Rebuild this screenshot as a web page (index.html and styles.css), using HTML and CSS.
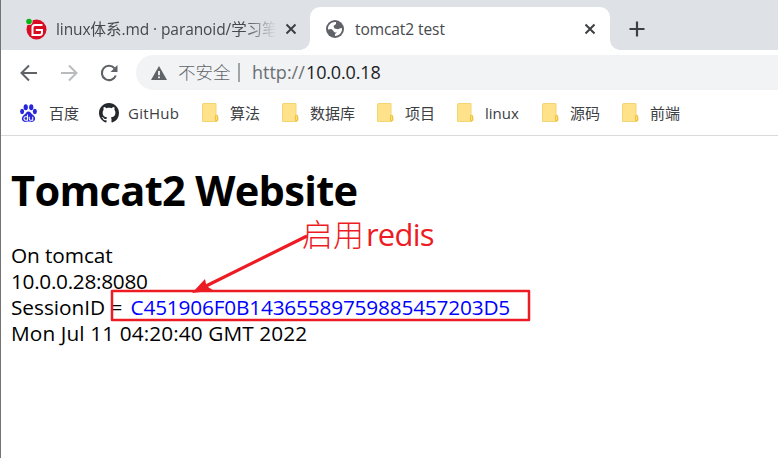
FILE: index.html
```html
<!DOCTYPE html>
<html lang="zh-CN">
<head>
<meta charset="utf-8">
<title>tomcat2 test</title>
<link rel="stylesheet" href="styles.css">
</head>
<body>
<svg class="defs" width="0" height="0" aria-hidden="true">
  <symbol id="folder" viewBox="0 0 17 19"><path d="M1 .5h13v12.200l2 1V17l-1 1.500H.5V1z" fill="#ffe28a" stroke="#f4d573"/><path d="M13.500 13v5M13.500 12.500h2v5h-2z" fill="#ffdf70" stroke="#edc344"/></symbol>
  <symbol id="close" viewBox="0 0 12 12"><path d="M1.500 1.500l9 9M10.500 1.500l-9 9" stroke="#3c4043" stroke-width="2"/></symbol>
</svg>
<div class="browser">
  <header class="tabs">
    <div class="tab tab-idle">
      <svg class="gitee" viewBox="0 0 22 22"><circle cx="11.500" cy="11.500" r="10" fill="#d90d22"/><path d="M17.500 7H10q-2.500 0-2.500 2.500V17h7q2.500 0 2.500-2.500V12h-6.200" fill="none" stroke="#fff" stroke-width="2"/><circle cx="4" cy="3.500" r="3.600" fill="#dee1e6"/><circle cx="4" cy="3.500" r="2.800" fill="#09b514"/></svg>
      <span class="tab-title fade">linux体系.md · paranoid/学习笔</span>
      <svg class="close"><use href="#close"/></svg>
    </div>
    <div class="tab tab-active">
      <svg class="globe" viewBox="0 0 18 18"><circle cx="9" cy="9" r="9" fill="#5f6368"/><path d="M10 2C5.500 1.500 1.500 5 2 9.500L5.500 9l2 2q.5 1.500 2 1.500h1.500L9 14v2c4.500 0 7.500-4 7-8l-2.500.5q-1 1-2.500.5T8.500 8.500L7.500 6l2.500-2z" fill="#fff"/></svg>
      <span class="tab-title active-title">tomcat2 test</span>
      <svg class="close"><use href="#close"/></svg>
    </div>
    <svg class="plus" viewBox="0 0 16 16"><path d="M8 .5v15M.5 8h15" stroke="#3c4043" stroke-width="2.200"/></svg>
  </header>
  <nav class="toolbar">
    <svg class="nav-icon" viewBox="0 0 18 18"><path d="M17 9H2M9 1.500L1.500 9 9 16.500" fill="none" stroke="#5f6368" stroke-width="2"/></svg>
    <svg class="nav-icon" viewBox="0 0 18 18"><path d="M1 9h15M9 1.500L16.500 9 9 16.500" fill="none" stroke="#b9bbbd" stroke-width="2"/></svg>
    <svg class="nav-icon" viewBox="0 0 18 18"><path d="M15.800 11.500A7.200 7.200 0 1 1 14.500 4.200" fill="none" stroke="#5f6368" stroke-width="2.100"/><path d="M17.500 1v7h-7z" fill="#5f6368"/></svg>
    <div class="address">
      <svg class="warning" viewBox="0 0 16 14"><path d="M8 0l8 14H0z" fill="#5f6368"/><path d="M8 5v4.300M8 10.400v1.900" stroke="#fff" stroke-width="1.700"/></svg>
      <span class="insecure">不安全</span><i class="divider"></i><span class="scheme">http://</span><span class="host">10.0.0.18</span>
    </div>
  </nav>
  <nav class="bookmarks">
    <a class="bookmark baidu"><svg viewBox="0 0 16 17"><g fill="#2726dc"><ellipse cx="5.400" cy="3" rx="2" ry="2.800"/><ellipse cx="10.600" cy="3" rx="2" ry="2.800"/><ellipse cx="2" cy="7.100" rx="1.900" ry="2.500"/><ellipse cx="14" cy="7.100" rx="1.900" ry="2.500"/><path d="M8 7c2 0 2.500 2.100 4.300 3.500 3.200 2.400 2.200 6.400-1 6.400-1.400 0-2-.3-3.300-.3s-1.900.3-3.300.3c-3.200 0-4.200-4-1-6.400C5.500 9.100 6 7 8 7z"/></g><path d="M7 10v5.300H5.200q-1.500 0-1.500-1.600t1.500-1.600H7M8.700 12v2q0 1.300 1.300 1.300h2V12" fill="none" stroke="#fff"/></svg><span>百度</span></a>
    <a class="bookmark github"><svg viewBox="0 0 16 16"><path fill="#24292e" d="M8 0C3.580 0 0 3.580 0 8c0 3.540 2.290 6.530 5.470 7.590.4.070.55-.17.55-.38 0-.19-.01-.82-.01-1.490-2.010.37-2.530-.49-2.690-.94-.09-.23-.48-.94-.82-1.130-.28-.15-.68-.52-.01-.53.63-.01 1.080.58 1.230.82.72 1.210 1.870.87 2.330.66.07-.52.28-.87.51-1.070-1.780-.2-3.640-.89-3.640-3.950 0-.87.31-1.590.82-2.150-.08-.2-.36-1.020.08-2.120 0 0 .67-.21 2.200.82.64-.18 1.320-.27 2-.27s1.360.09 2 .27c1.530-1.040 2.200-.82 2.200-.82.44 1.100.16 1.920.08 2.120.51.56.82 1.270.82 2.150 0 3.070-1.870 3.750-3.650 3.950.29.25.54.73.54 1.480 0 1.070-.01 1.930-.01 2.200 0 .21.15.46.55.38A8.010 8.010 0 0 0 16 8c0-4.420-3.580-8-8-8z"/></svg><span>GitHub</span></a>
    <a class="bookmark w80"><svg><use href="#folder"/></svg><span>算法</span></a>
    <a class="bookmark w95"><svg><use href="#folder"/></svg><span>数据库</span></a>
    <a class="bookmark w80"><svg><use href="#folder"/></svg><span>项目</span></a>
    <a class="bookmark w85"><svg><use href="#folder"/></svg><span>linux</span></a>
    <a class="bookmark w80"><svg><use href="#folder"/></svg><span>源码</span></a>
    <a class="bookmark w80"><svg><use href="#folder"/></svg><span>前端</span></a>
  </nav>
  <main class="page">
    <h1>Tomcat2 Website</h1>
    <div class="line on">On tomcat</div>
    <div class="line ip">10.0.0.28:8080</div>
    <div class="line session"><span class="label">SessionID =</span><span class="session-id">C451906F0B14365589759885457203D5</span></div>
    <div class="line date">Mon Jul 11 04:20:40 GMT 2022</div>
  </main>
  <svg class="annotation" viewBox="0 0 778 458" fill="none"><rect x="112" y="291" width="417" height="29" stroke="#ed1c24" stroke-width="2.500" stroke-linejoin="round"/><path d="M307 236L204 287" stroke="#ed1c24" stroke-width="3.200"/><path d="M192 293l13-14 1.500 7 7 4.500z" fill="#ed1c24"/></svg>
  <div class="note"><span class="note-cn">启用</span><span class="note-en">redis</span></div>
</div>
</body>
</html>
```
FILE: styles.css
```css
* { box-sizing: border-box; }
body { margin: 0; width: 778px; height: 458px; overflow: hidden; background: #fff; font-family: "Open Sans", "Noto Sans CJK SC", sans-serif; }
svg { display: block; flex: none; }
.defs { position: absolute; }
.browser { position: relative; height: 458px; border-left: 1px solid #747474; }
.tabs { display: flex; height: 50px; padding-top: 7px; background: #dee1e6; }
.tab { display: flex; align-items: center; height: 43px; white-space: nowrap; }
.tab-idle { width: 309px; padding-left: 24px; background: #dee1e6; border-radius: 0 0 10px 0; }
.tab-active { position: relative; width: 300px; padding-left: 16px; background: #fff; border-radius: 10px 10px 0 0; }
.tab-active::before, .tab-active::after { content: ""; position: absolute; bottom: 0; width: 10px; height: 10px; }
.tab-active::before { left: -10px; background: radial-gradient(circle at 0 0, transparent 9.5px, #fff 10px); }
.tab-active::after { right: -10px; background: radial-gradient(circle at 100% 0, transparent 9.5px, #fff 10px); }
.gitee { width: 22px; height: 22px; }
.tab-title { margin-left: 9px; font-size: 15.5px; line-height: 24px; color: #45494d; }
.fade { width: 220px; overflow: hidden; letter-spacing: -.08px; -webkit-mask-image: linear-gradient(90deg, #000 188px, transparent 220px); mask-image: linear-gradient(90deg, #000 188px, transparent 220px); }
.active-title { width: 220px; margin-left: 11px; letter-spacing: -.08px; }
.close { width: 12px; height: 12px; margin-left: 9px; }
.tab-active .close { margin-left: 9px; }
.globe { width: 18px; height: 18px; }
.plus { width: 16px; height: 16px; margin: 14px 0 0 19px; }
.toolbar { display: flex; align-items: center; height: 45px; padding-left: 19px; gap: 22px; }
.nav-icon { width: 18px; height: 18px; }
.address { display: flex; align-items: center; flex: 1; height: 35px; margin-left: -4px; padding-left: 15px; background: #f1f3f4; border-radius: 18px 0 0 18px; font-size: 18px; line-height: 24px; white-space: nowrap; }
.warning { width: 16px; height: 14px; }
.insecure { width: 53px; margin-left: 11px; color: #5f6368; font-size: 17.5px; font-weight: 300; }
.address span { position: relative; top: -1px; }
.divider { width: 2px; height: 19px; margin: 0 12px 0 7px; background: #a2a5a8; }
.scheme { width: 54px; color: #6b6f73; }
.host { color: #202124; letter-spacing: -.15px; }
.bookmarks { display: flex; align-items: center; height: 41px; padding: 0 0 5px 19px; border-bottom: 1px solid #d9dadc; }
.bookmark { display: flex; align-items: center; color: #3c4043; font-size: 15px; line-height: 20px; white-space: nowrap; }
.bookmark svg { width: 17px; height: 19px; margin-right: 11px; }
.baidu { width: 79px; }
.baidu svg { width: 17px; height: 18px; margin-right: 12px; }
.github { width: 103px; letter-spacing: .3px; }
.github svg { width: 20px; height: 20px; margin-right: 9px; }
.w80 { width: 80px; }
.w85 { width: 85px; }
.w95 { width: 95px; }
.page { padding: 26px 0 0 10px; color: #000; font-size: 20.8px; }
h1 { margin: 0 0 24px; font-size: 41.6px; line-height: 56px; font-weight: 700; letter-spacing: -.7px; white-space: nowrap; }
.line { height: 26px; line-height: 26px; white-space: nowrap; }
.on { letter-spacing: -.1px; }
.ip { letter-spacing: -.3px; }
.date { letter-spacing: .1px; }
.session { display: flex; }
.label { width: 119.5px; letter-spacing: -.03px; }
.session-id { color: #00f; letter-spacing: -.18px; }
.annotation { position: absolute; left: -1px; top: 0; width: 778px; height: 458px; }
.note { position: absolute; left: 301px; top: 218px; display: flex; color: #ed1c24; font-size: 31px; line-height: 32px; font-weight: 300; }
.note-cn { width: 64px; }
.note-en { font-weight: 400; letter-spacing: -.8px; }
```
